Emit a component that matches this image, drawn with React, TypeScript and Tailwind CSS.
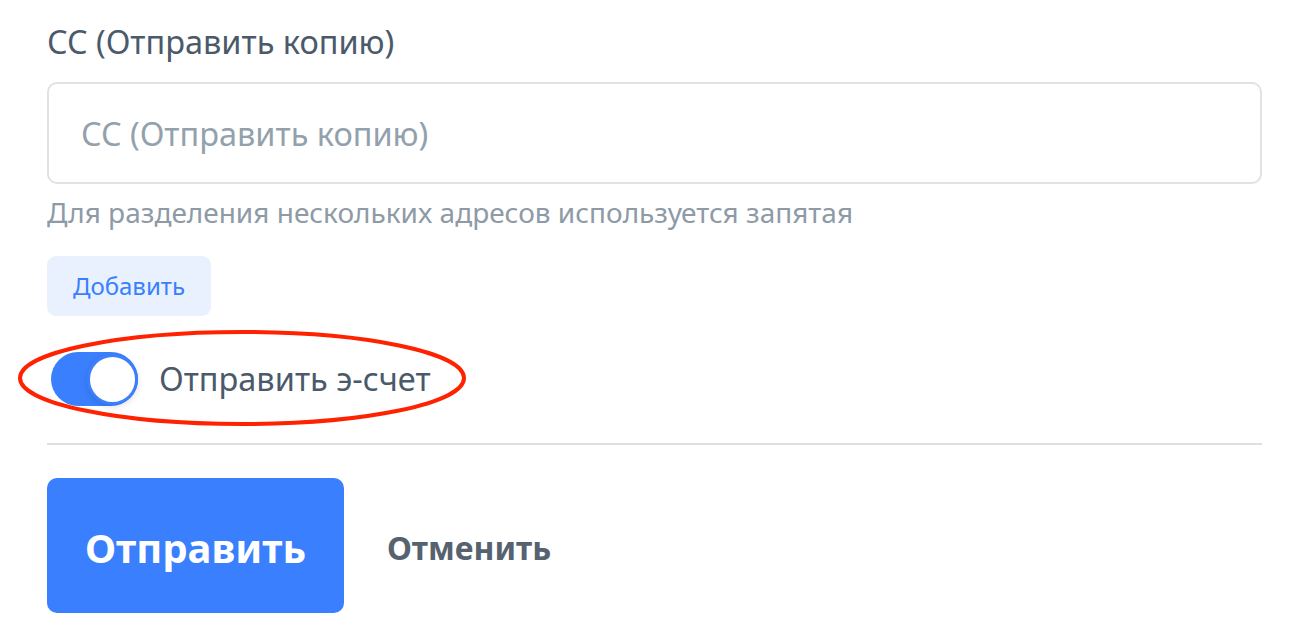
import { useState } from "react";

export default function App() {
  const [eInvoice, setEInvoice] = useState(true);

  return (
    <div className="min-h-screen w-full bg-white font-['Noto_Sans',sans-serif]">
      <div className="px-[47px] pt-[20px] pr-[46px]">
        {/* CC field */}
        <label className="block text-[32.5px] leading-[44px] text-[#4b5a6b]">CC (Отправить копию)</label>
        <input
          type="text"
          placeholder="CC (Отправить копию)"
          className="mt-[18px] block h-[102px] w-full rounded-[10px] border-2 border-[#e2e2e2] px-[32px] text-[32.5px] text-[#4b5a6b] placeholder:text-[#93a1ad] outline-none"
        />
        <p className="mt-[9px] text-[28px] leading-[38px] text-[#8e9aa6]">
          Для разделения нескольких адресов используется запятая
        </p>

        <button className="mt-[25px] flex h-[60px] w-[164px] items-center justify-center rounded-[9px] bg-[#e9f1fe] text-[24px] text-[#3a7ffd]">
          Добавить
        </button>

        {/* E-invoice toggle */}
        <div className="relative mt-[36px] flex items-center">
          <button
            onClick={() => setEInvoice((v) => !v)}
            aria-pressed={eInvoice}
            className={`ml-[4px] flex h-[54px] w-[87px] items-center rounded-full p-0 ${
              eInvoice ? "justify-end bg-[#3a7ffd]" : "justify-start bg-[#d5dbe2]"
            }`}
          >
            <span className="block h-[51px] w-[51px] rounded-full border-[3px] border-[#3a7ffd] bg-white shadow-[0_2px_6px_rgba(0,0,0,0.12)]" />
          </button>
          <span className="ml-[21px] text-[32.5px] leading-[40px] text-[#4b5a6b]">Отправить э-счет</span>

          {/* red annotation ellipse */}
          <svg
            className="pointer-events-none absolute left-[-29px] top-[-24px]"
            width="454"
            height="100"
            viewBox="0 0 454 100"
          >
            <ellipse cx="224" cy="50" rx="222" ry="46" fill="none" stroke="#ff2200" strokeWidth="4" />
          </svg>
        </div>

        <div className="mt-[37px] h-[2px] w-full bg-[#e0e0e0]" />

        {/* actions */}
        <div className="mt-[33px] flex items-center">
          <button className="flex h-[135px] w-[297px] items-center justify-center rounded-[10px] bg-[#3a7ffd] pt-[4px] text-[40px] font-bold text-white">
            Отправить
          </button>
          <button className="ml-[43px] pt-[4px] text-[32px] font-bold text-[#56626f]">Отменить</button>
        </div>
      </div>
    </div>
  );
}
